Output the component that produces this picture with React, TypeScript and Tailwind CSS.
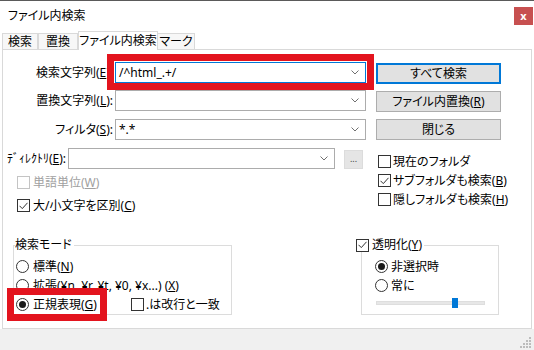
import React from "react";

function Chevron() {
  return (
    <svg width="8" height="5" viewBox="0 0 8 5" className="shrink-0">
      <path d="M0.5 0.5 L4 4 L7.5 0.5" stroke="#707070" fill="none" strokeWidth="1" />
    </svg>
  );
}

function Combo({ value, width, focused }: { value?: string; width: string; focused?: boolean }) {
  return (
    <div
      className={`${width} h-[21px] flex items-center justify-between pl-[3px] pr-[6px] bg-white border ${
        focused ? "border-[#0078d7]" : "border-[#acacac]"
      }`}
    >
      <span className="text-black leading-none">{value}</span>
      <Chevron />
    </div>
  );
}

function Check({ checked, disabled }: { checked?: boolean; disabled?: boolean }) {
  return (
    <span
      className={`w-[13px] h-[13px] border bg-white flex items-center justify-center shrink-0 ${
        disabled ? "border-[#c4c4c4]" : "border-[#333333]"
      }`}
    >
      {checked && (
        <svg width="9" height="8" viewBox="0 0 9 8">
          <path d="M0.5 3.8 L3.3 6.6 L8.5 0.8" stroke="#333333" fill="none" strokeWidth="1" />
        </svg>
      )}
    </span>
  );
}

function Radio({ on }: { on?: boolean }) {
  return (
    <span className="w-[13px] h-[13px] rounded-full border border-[#333333] bg-white flex items-center justify-center shrink-0">
      {on && <span className="w-[7px] h-[7px] rounded-full bg-[#1a1a1a]" />}
    </span>
  );
}

function Btn({ children, primary }: { children: React.ReactNode; primary?: boolean }) {
  return (
    <div
      className={`w-[125px] h-[21px] flex items-center justify-center bg-[#e1e1e1] border ${
        primary ? "border-[#0078d7] shadow-[inset_0_0_0_1px_#0078d7]" : "border-[#adadad]"
      }`}
    >
      {children}
    </div>
  );
}

const tabs = [
  { label: "検索", w: "w-[36px]" },
  { label: "置換", w: "w-[40px]" },
];

export default function App() {
  return (
    <div className="w-[534px] h-[350px] flex flex-col bg-white border-t border-[#5a5a5a] overflow-hidden text-[12px] leading-[14px] text-black font-['Noto_Sans','Noto_Sans_CJK_JP',sans-serif] [font-feature-settings:'palt']">
      {/* title bar */}
      <div className="h-[30px] flex items-center justify-between pl-[8px] pr-[1px] shrink-0">
        <span className="text-[12px]">ファイル内検索</span>
        <div className="w-[19px] h-[18px] bg-[#c75050] text-white flex items-center justify-center text-[11px] font-bold leading-none pb-[2px]">
          x
        </div>
      </div>

      {/* tabs */}
      <div className="h-[18px] flex items-end pl-[2px] shrink-0">
        {tabs.map((t) => (
          <div
            key={t.label}
            className={`${t.w} h-[16px] flex items-center justify-center bg-[#f7f7f7] border border-b-0 border-[#d9d9d9]`}
          >
            {t.label}
          </div>
        ))}
        <div className="w-[80px] h-[19px] -mb-px relative z-10 flex items-center justify-center bg-white border border-b-0 border-[#d9d9d9]">
          ファイル内検索
        </div>
        <div className="w-[37px] h-[16px] flex items-center justify-center bg-[#f7f7f7] border border-b-0 border-l-0 border-[#d9d9d9]">
          マーク
        </div>
      </div>

      {/* panel */}
      <div className="mx-[2px] h-[280px] shrink-0 bg-white border border-[#d9d9d9] flex flex-col">
        {/* combo rows */}
        <div className="flex items-center h-[21px] mt-[12px]">
          <span className="w-[110px] text-right">
            検索文字列(<u>E</u>):
          </span>
          <div className="relative ml-[2px]">
            <Combo value="/^html_.+/" width="w-[251px]" focused />
            <div className="absolute -left-[8px] -top-[8px] -right-[8px] -bottom-[7px] border-[7px] border-[#e3141e]" />
          </div>
          <div className="ml-[10px] mt-[2px]">
            <Btn primary>すべて検索</Btn>
          </div>
        </div>

        <div className="flex items-center h-[21px] mt-[7px]">
          <span className="w-[110px] text-right">
            置換文字列(<u>L</u>):
          </span>
          <div className="ml-[2px]">
            <Combo width="w-[251px]" />
          </div>
          <div className="ml-[10px] mt-[2px]">
            <Btn>
              ファイル内置換(<u>R</u>)
            </Btn>
          </div>
        </div>

        <div className="flex items-center h-[21px] mt-[8px]">
          <span className="w-[110px] text-right">
            フィルタ(<u>S</u>):
          </span>
          <div className="ml-[2px]">
            <Combo value="*.*" width="w-[251px]" />
          </div>
          <div className="ml-[10px]">
            <Btn>閉じる</Btn>
          </div>
        </div>

        {/* directory + options */}
        <div className="flex h-[92px] mt-[8px]">
          <div className="w-[373px] flex flex-col">
            <div className="flex items-center h-[21px]">
              <span className="w-[63px] text-right whitespace-nowrap">
                ﾃﾞｨﾚｸﾄﾘ(<u>E</u>):
              </span>
              <div className="ml-[2px]">
                <Combo width="w-[267px]" />
              </div>
              <div className="ml-[9px] mt-[2px] w-[19px] h-[19px] bg-[#e5e5e5] border border-[#dcdcdc] flex items-end justify-center pb-[5px] text-[9px] leading-none text-[#444]">
                ...
              </div>
            </div>
            <label className="flex items-center gap-[3px] h-[19px] mt-[4px] pl-[14px] text-[#a0a0a0]">
              <Check disabled />
              <span>
                単語単位(<u>W</u>)
              </span>
            </label>
            <label className="flex items-center gap-[3px] h-[19px] mt-[4px] pl-[14px]">
              <Check checked />
              <span>
                大/小文字を区別(<u>C</u>)
              </span>
            </label>
          </div>
          <div className="flex flex-col pt-[4px] pl-[2px]">
            <label className="flex items-center gap-[2px] h-[19px]">
              <Check />
              <span>現在のフォルダ</span>
            </label>
            <label className="flex items-center gap-[2px] h-[19px]">
              <Check checked />
              <span>
                サブフォルダも検索(<u>B</u>)
              </span>
            </label>
            <label className="flex items-center gap-[2px] h-[19px]">
              <Check />
              <span>
                隠しフォルダも検索(<u>H</u>)
              </span>
            </label>
          </div>
        </div>

        {/* group boxes */}
        <div className="flex mt-[-2px]">
          <div className="ml-[10px] w-[219px] mt-[7px] h-[70px] border border-[#dcdcdc] flex flex-col">
            <span className="-mt-[8px] ml-px w-fit bg-white pr-[2px] h-[14px]">検索モード</span>
            <label className="flex items-center gap-[4px] h-[19px] mt-[5px] pl-[2px]">
              <Radio />
              <span>
                標準(<u>N</u>)
              </span>
            </label>
            <label className="flex items-center gap-[4px] h-[19px] pl-[2px]">
              <Radio />
              <span className="whitespace-nowrap">
                拡張(¥n, ¥r, ¥t, ¥0, ¥x...) (<u>X</u>)
              </span>
            </label>
            <div className="flex items-center h-[19px] pl-[2px]">
              <label className="relative w-[84px] h-[19px] flex items-center gap-[4px]">
                <Radio on />
                <span>
                  正規表現(<u>G</u>)
                </span>
                <span className="absolute -left-[9px] -top-[7px] -right-[7px] -bottom-[7px] border-[7px] border-[#e3141e]" />
              </label>
              <label className="ml-[31px] flex items-center gap-[2px]">
                <Check />
                <span>.は改行と一致</span>
              </label>
            </div>
          </div>

          <div className="ml-[129px] w-[138px] mt-[7px] h-[70px] border border-[#dcdcdc] flex flex-col">
            <label className="-mt-[8px] -ml-[6px] w-fit bg-white pr-[2px] h-[14px] flex items-center gap-[3px]">
              <Check checked />
              <span>
                透明化(<u>Y</u>)
              </span>
            </label>
            <label className="flex items-center gap-[3px] h-[19px] mt-[5px] pl-[13px]">
              <Radio on />
              <span>非選択時</span>
            </label>
            <label className="flex items-center gap-[3px] h-[19px] pl-[13px]">
              <Radio />
              <span>常に</span>
            </label>
            <div className="ml-[14px] mt-[6px] relative w-[109px] h-[4px] bg-[#e7e7e7] border border-[#dedede]">
              <span className="absolute left-[75px] -top-[4px] w-[6px] h-[10px] bg-[#0078d7]" />
            </div>
          </div>
        </div>
      </div>

      {/* status strip */}
      <div className="flex-1 bg-[#f0f0f0] flex items-end justify-end pr-[2px] pb-[2px]">
        <svg width="12" height="12" viewBox="0 0 12 12">
          <rect x="9" y="1" width="2" height="2" fill="#bcbcbc" />
          <rect x="6" y="4" width="2" height="2" fill="#bcbcbc" />
          <rect x="9" y="4" width="2" height="2" fill="#bcbcbc" />
          <rect x="3" y="7" width="2" height="2" fill="#bcbcbc" />
          <rect x="6" y="7" width="2" height="2" fill="#bcbcbc" />
          <rect x="9" y="7" width="2" height="2" fill="#bcbcbc" />
          <rect x="0" y="10" width="2" height="2" fill="#bcbcbc" />
          <rect x="3" y="10" width="2" height="2" fill="#bcbcbc" />
          <rect x="6" y="10" width="2" height="2" fill="#bcbcbc" />
          <rect x="9" y="10" width="2" height="2" fill="#bcbcbc" />
        </svg>
      </div>
    </div>
  );
}
